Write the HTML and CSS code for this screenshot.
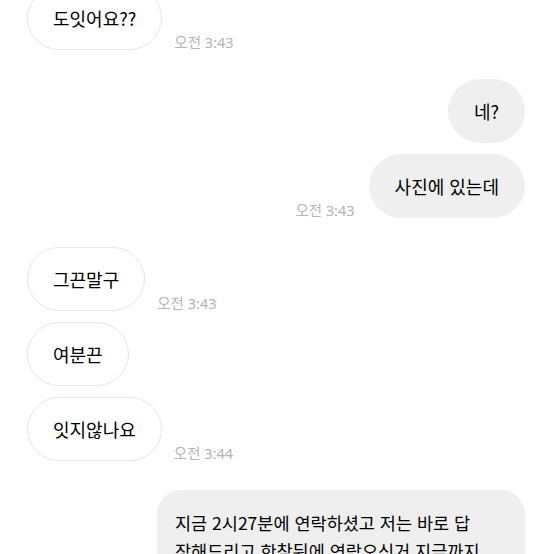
FILE: index.html
```html
<!DOCTYPE html>
<html lang="ko">
<head>
    <meta charset="UTF-8">
    <meta name="viewport" content="width=device-width, initial-scale=1.0">
    <title>Chat</title>
    <link rel="stylesheet" href="styles.css">
</head>
<body>

    <div class="chat">
        <div class="row them first">
            <div class="bubble">도잇어요??</div>
            <span class="time">오전 3:43</span>
        </div>

        <div class="row me group">
            <div class="bubble">네?</div>
        </div>
        <div class="row me">
            <span class="time">오전 3:43</span>
            <div class="bubble">사진에 있는데</div>
        </div>

        <div class="row them group">
            <div class="bubble">그끈말구</div>
            <span class="time">오전 3:43</span>
        </div>
        <div class="row them">
            <div class="bubble">여분끈</div>
        </div>
        <div class="row them">
            <div class="bubble">잇지않나요</div>
            <span class="time">오전 3:44</span>
        </div>

        <div class="row me group">
            <div class="bubble long">지금 2시27분에 연락하셨고 저는 바로 답<br>장해드리고 한참뒤에 연락오신거 지금까지</div>
        </div>
    </div>

</body>
</html>
```

FILE: styles.css
```css
body {
    margin: 0;
    background-color: #fff;
    font-family: "Noto Sans CJK KR", "Noto Sans", sans-serif;
    color: #000;
    overflow: hidden;
}

.chat {
    display: flex;
    flex-direction: column;
    gap: 11px;
    padding: 0 29px 0 27px;
    margin-top: -14px;
}

.row {
    display: flex;
    align-items: flex-end;
    gap: 12px;
}

.row.group {
    margin-top: 18px;
}

.row.me {
    justify-content: flex-end;
}

.bubble {
    border: 1px solid #e6e6e6;
    border-radius: 32px;
    padding: 20px 25px;
    font-size: 18px;
    line-height: 22px;
    background-color: #fff;
    white-space: nowrap;
}

.me .bubble {
    background-color: #efefef;
    border-color: #efefef;
}

.bubble.long {
    border-radius: 24px;
    padding: 18px 17px;
    font-size: 17.5px;
    line-height: 28px;
    width: 332px;
}

.time {
    font-family: "Noto Sans", "Noto Sans CJK KR", sans-serif;
    font-size: 14.5px;
    line-height: 16px;
    color: #b4b4b4;
    white-space: nowrap;
}

.me .time {
    margin-right: 2px;
}
```
